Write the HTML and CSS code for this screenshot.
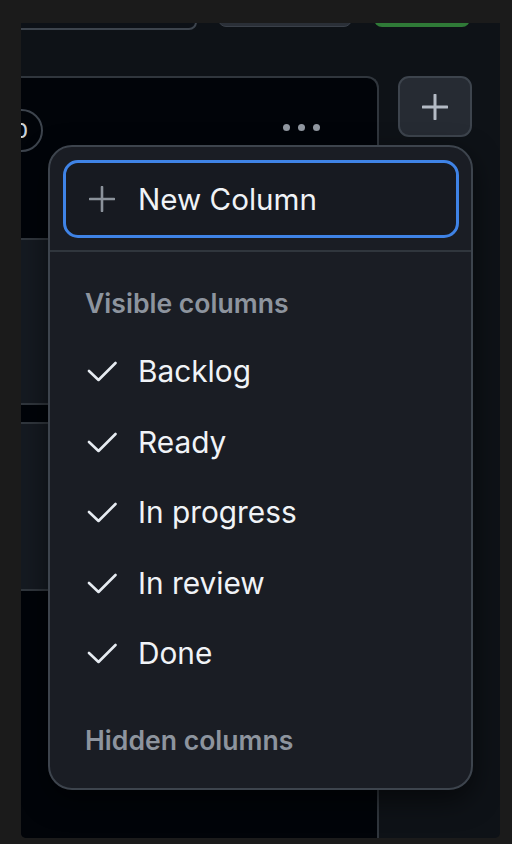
FILE: index.html
```html
<!DOCTYPE html>
<html lang="en">
<head>
<meta charset="utf-8">
<title>Columns menu</title>
<link rel="stylesheet" href="styles.css">
</head>
<body>
<div class="app">
  <div class="topbar">
    <div class="search"></div>
    <div class="btn-gray"></div>
    <div class="btn-green"></div>
  </div>
  <div class="board">
    <section class="column">
      <header class="col-head">
        <span class="counter">0</span>
        <span class="dots"><i></i><i></i><i></i></span>
      </header>
      <div class="cards">
        <div class="card card-a"></div>
        <div class="card card-b"></div>
      </div>
    </section>
    <button class="add-col" aria-label="Add column">
      <svg viewBox="0 0 26 26" width="26" height="26"><path d="M13 1v24M1 13h24" stroke="currentColor" stroke-width="3" stroke-linecap="round" fill="none"/></svg>
    </button>
  </div>

  <div class="menu">
    <div class="menu-head">
      <button class="new-col">
        <svg viewBox="0 0 26 26" width="26" height="26"><path d="M13 1v24M1 13h24" stroke="currentColor" stroke-width="2.6" stroke-linecap="round" fill="none"/></svg>
        <span>New Column</span>
      </button>
    </div>
    <div class="menu-list">
      <div class="group-title">Visible columns</div>
      <ul class="items">
        <li><svg class="check" viewBox="0 0 30 22" width="30" height="22"><path d="M2 11l9.5 9L28.5 3" stroke="currentColor" stroke-width="2.6" stroke-linecap="round" stroke-linejoin="round" fill="none"/></svg><span>Backlog</span></li>
        <li><svg class="check" viewBox="0 0 30 22" width="30" height="22"><path d="M2 11l9.5 9L28.5 3" stroke="currentColor" stroke-width="2.6" stroke-linecap="round" stroke-linejoin="round" fill="none"/></svg><span>Ready</span></li>
        <li><svg class="check" viewBox="0 0 30 22" width="30" height="22"><path d="M2 11l9.5 9L28.5 3" stroke="currentColor" stroke-width="2.6" stroke-linecap="round" stroke-linejoin="round" fill="none"/></svg><span>In progress</span></li>
        <li><svg class="check" viewBox="0 0 30 22" width="30" height="22"><path d="M2 11l9.5 9L28.5 3" stroke="currentColor" stroke-width="2.6" stroke-linecap="round" stroke-linejoin="round" fill="none"/></svg><span>In review</span></li>
        <li><svg class="check" viewBox="0 0 30 22" width="30" height="22"><path d="M2 11l9.5 9L28.5 3" stroke="currentColor" stroke-width="2.6" stroke-linecap="round" stroke-linejoin="round" fill="none"/></svg><span>Done</span></li>
      </ul>
      <div class="group-title hidden-title">Hidden columns</div>
    </div>
  </div>
</div>
</body>
</html>
```

FILE: styles.css
```css
* { box-sizing: border-box; }

html, body {
  margin: 0;
  padding: 0;
  background: #1b1b1b;
  font-family: Inter, "Noto Sans", "Liberation Sans", sans-serif;
}

.app {
  position: relative;
  margin: 23px 12px 0 21px;
  width: 479px;
  height: 815px;
  background: #0e1217;
  border-radius: 0 0 5px 5px;
  overflow: hidden;
  display: flex;
  flex-direction: column;
}

/* top toolbar, mostly scrolled out of view */
.topbar {
  display: flex;
  align-items: flex-end;
  height: 7px;
  flex: none;
}
.search {
  flex: none;
  width: 196px;
  height: 40px;
  margin-left: -20px;
  border: 2px solid #3d444d;
  border-radius: 8px;
  background: #0d1117;
}
.btn-gray {
  flex: none;
  width: 134px;
  height: 40px;
  margin-left: 21px;
  margin-bottom: 3px;
  border-radius: 8px;
  background: #2a2f37;
  border: 1px solid #3a4049;
}
.btn-green {
  flex: none;
  width: 96px;
  height: 40px;
  margin-left: 22px;
  margin-bottom: 3px;
  border-radius: 8px;
  background: #2f7a37;
}

/* board */
.board {
  display: flex;
  align-items: flex-start;
  margin-top: 46px;
  flex: 1;
  min-height: 0;
}
.column {
  flex: none;
  width: 398px;
  height: 100%;
  margin-left: -40px;
  background: #010409;
  border: 2px solid #30363d;
  border-left: none;
  border-bottom: none;
  border-top-right-radius: 12px;
}
.col-head {
  display: flex;
  align-items: flex-start;
  padding: 31px 57px 0 19px;
}
.counter {
  width: 43px;
  height: 43px;
  border: 2px solid #3d444d;
  border-radius: 50%;
  display: flex;
  align-items: center;
  justify-content: center;
  color: #c9d1d9;
  font-size: 20px;
  font-weight: 500;
}
.dots {
  margin-left: auto;
  margin-top: 15px;
  display: flex;
  gap: 8px;
}
.dots i {
  display: block;
  width: 7px;
  height: 7px;
  border-radius: 50%;
  background: #9198a1;
}
.cards {
  display: flex;
  flex-direction: column;
  gap: 17px;
  padding: 86px 14px 0 8px;
}
.card {
  border: 2px solid #30363d;
  border-radius: 10px;
  background: #151a21;
}
.card-a { height: 167px; }
.card-b { height: 169px; }

.add-col {
  flex: none;
  margin-left: 19px;
  width: 74px;
  height: 61px;
  border: 2px solid #3d444d;
  border-radius: 11px;
  background: #262b33;
  color: #b4bbc5;
  display: flex;
  align-items: center;
  justify-content: center;
  padding: 0;
}

/* overlay menu */
.menu {
  position: absolute;
  left: 27px;
  top: 122px;
  width: 425px;
  height: 645px;
  background: #1a1d24;
  border: 2px solid #3d444d;
  border-radius: 24px;
  box-shadow: 0 10px 28px rgba(0, 0, 0, 0.55);
  overflow: hidden;
}
.menu-head {
  padding: 13px 12px 12px 13px;
  border-bottom: 2px solid #30363d;
}
.new-col {
  display: flex;
  align-items: center;
  width: 100%;
  height: 78px;
  padding: 0 0 0 23px;
  gap: 23px;
  background: #171a21;
  border: 3px solid #3f83e6;
  border-radius: 15px;
  color: #8b929b;
  font-family: inherit;
  font-size: 29.6px;
  cursor: pointer;
}
.new-col span {
  color: #f0f3f7;
}
.menu-list {
  padding: 33px 0 0 35px;
}
.group-title {
  height: 36px;
  line-height: 36px;
  font-size: 26.6px;
  font-weight: 600;
  color: #8d949e;
}
.items {
  list-style: none;
  margin: 15px 0 0;
  padding: 0;
}
.items li {
  display: flex;
  align-items: center;
  height: 70.5px;
  color: #f0f3f7;
  font-size: 29.8px;
}
.check {
  flex: none;
  margin-left: 2px;
  margin-right: 21px;
  color: #e6ebf1;
}
.hidden-title {
  margin-top: 33px;
}
```
